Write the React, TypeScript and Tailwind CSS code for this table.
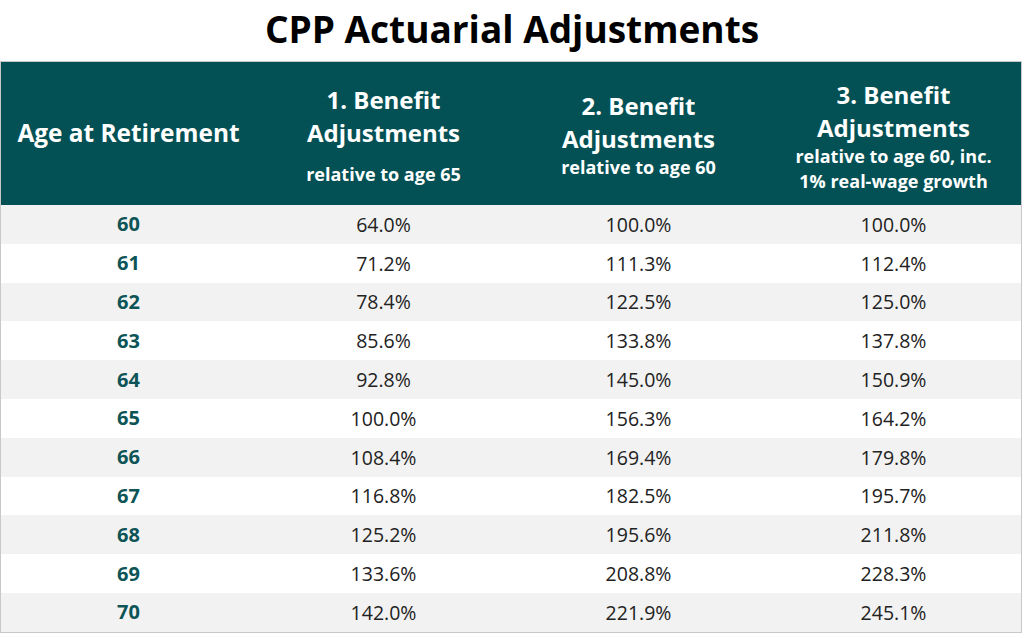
const rows = [
  ["60", "64.0%", "100.0%", "100.0%"],
  ["61", "71.2%", "111.3%", "112.4%"],
  ["62", "78.4%", "122.5%", "125.0%"],
  ["63", "85.6%", "133.8%", "137.8%"],
  ["64", "92.8%", "145.0%", "150.9%"],
  ["65", "100.0%", "156.3%", "164.2%"],
  ["66", "108.4%", "169.4%", "179.8%"],
  ["67", "116.8%", "182.5%", "195.7%"],
  ["68", "125.2%", "195.6%", "211.8%"],
  ["69", "133.6%", "208.8%", "228.3%"],
  ["70", "142.0%", "221.9%", "245.1%"],
];

export default function App() {
  return (
    <div
      className="w-[1024px] h-[638px] bg-white overflow-hidden"
      style={{ fontFamily: '"Open Sans", "Noto Sans", sans-serif' }}
    >
      {/* Title */}
      <h1 className="h-[61px] flex items-center justify-center text-[37px] font-bold text-black leading-none pb-[4px]">
        CPP Actuarial Adjustments
      </h1>

      {/* Table */}
      <div className="w-[1022px] border border-[#c8c8c8]">
        <div className="grid grid-cols-4 h-[143px] bg-[#035155] text-white text-center">
          <div className="flex items-center justify-center text-[24.4px] font-bold">
            Age at Retirement
          </div>
          <div className="flex flex-col items-center justify-center pt-[2px]">
            <span className="text-[24px] font-bold leading-[33px]">1. Benefit</span>
            <span className="text-[24px] font-bold leading-[33px]">Adjustments</span>
            <span className="text-[18px] font-bold leading-[25px] mt-[13px]">relative to age 65</span>
          </div>
          <div className="flex flex-col items-center justify-center pt-[2px]">
            <span className="text-[24px] font-bold leading-[33px]">2. Benefit</span>
            <span className="text-[24px] font-bold leading-[33px]">Adjustments</span>
            <span className="text-[18px] font-bold leading-[25px]">relative to age 60</span>
          </div>
          <div className="flex flex-col items-center justify-center pt-[4px]">
            <span className="text-[24px] font-bold leading-[33px]">3. Benefit</span>
            <span className="text-[24px] font-bold leading-[33px]">Adjustments</span>
            <span className="text-[18px] font-bold leading-[25px]">relative to age 60, inc.</span>
            <span className="text-[18px] font-bold leading-[25px]">1% real-wage growth</span>
          </div>
        </div>

        {rows.map((r, i) => (
          <div
            key={r[0]}
            className={`grid grid-cols-4 h-[38.8px] items-center text-center text-[19.5px] text-[#222] ${
              i % 2 === 0 ? "bg-[#f2f2f2]" : "bg-white"
            }`}
          >
            <span className="font-bold text-[20px] text-[#0d5456]">{r[0]}</span>
            <span>{r[1]}</span>
            <span>{r[2]}</span>
            <span>{r[3]}</span>
          </div>
        ))}
      </div>
    </div>
  );
}
